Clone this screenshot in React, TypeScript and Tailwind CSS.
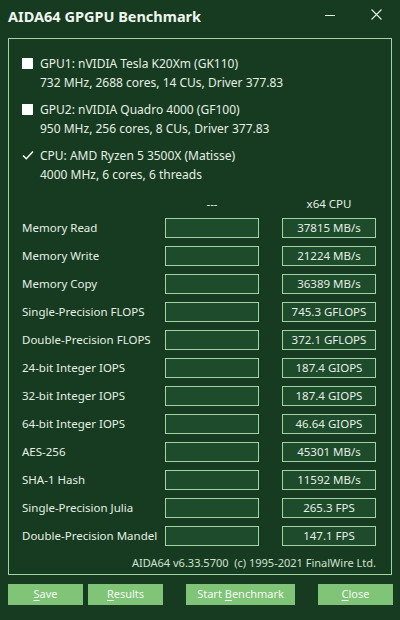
import React from "react";

const devices = [
  { name: "GPU1: nVIDIA Tesla K20Xm (GK110)", info: "732 MHz, 2688 cores, 14 CUs, Driver 377.83", checked: false },
  { name: "GPU2: nVIDIA Quadro 4000 (GF100)", info: "950 MHz, 256 cores, 8 CUs, Driver 377.83", checked: false },
  { name: "CPU: AMD Ryzen 5 3500X (Matisse)", info: "4000 MHz, 6 cores, 6 threads", checked: true },
];

const results = [
  ["Memory Read", "37815 MB/s"],
  ["Memory Write", "21224 MB/s"],
  ["Memory Copy", "36389 MB/s"],
  ["Single-Precision FLOPS", "745.3 GFLOPS"],
  ["Double-Precision FLOPS", "372.1 GFLOPS"],
  ["24-bit Integer IOPS", "187.4 GIOPS"],
  ["32-bit Integer IOPS", "187.4 GIOPS"],
  ["64-bit Integer IOPS", "46.64 GIOPS"],
  ["AES-256", "45301 MB/s"],
  ["SHA-1 Hash", "11592 MB/s"],
  ["Single-Precision Julia", "265.3 FPS"],
  ["Double-Precision Mandel", "147.1 FPS"],
];

function Check({ checked }: { checked: boolean }) {
  if (!checked) return <span className="block h-[11px] w-[11px] bg-white" />;
  return (
    <svg width="12" height="11" viewBox="0 0 12 11" className="block">
      <path d="M1 5.5 L4.3 8.8 L11 1.5" fill="none" stroke="#ffffff" strokeWidth="1.4" />
    </svg>
  );
}

function Btn({ children, w }: { children: React.ReactNode; w: string }) {
  return (
    <button className={`h-[21px] ${w} bg-[#7fc477] text-[11px] text-[#f4fbf2]`}>
      {children}
    </button>
  );
}

export default function App() {
  return (
    <div
      className="h-[620px] w-[400px] overflow-hidden bg-[#173b21] text-[#e4efe3]"
      style={{ fontFamily: '"Noto Sans", "Open Sans", sans-serif' }}
    >
      <div className="flex h-[38px] items-center pb-[9px] pl-[8px] pr-[18px]">
        <h1 className="mt-[4px] flex-1 text-[14.5px] font-bold leading-none text-[#eef5ed]">
          AIDA64 GPGPU Benchmark
        </h1>
        <svg width="10" height="10" viewBox="0 0 10 10" className="mr-[36px]">
          <path d="M0 5.5 H10" stroke="#e4efe3" strokeWidth="1" />
        </svg>
        <svg width="11" height="11" viewBox="0 0 11 11">
          <path d="M0.5 0.5 L10.5 10.5 M10.5 0.5 L0.5 10.5" stroke="#e4efe3" strokeWidth="1.1" />
        </svg>
      </div>

      <div className="ml-[8px] w-[384px] border border-[#a3d3a3] pl-[13px] pr-[14px] pt-[15px] text-[11.5px]">
        <div className="flex flex-col gap-[8px] text-[12px]">
          {devices.map((d) => (
            <div key={d.name} className="leading-[19px]">
              <div className="flex items-center">
                <span className="flex w-[18px] items-center">
                  <Check checked={d.checked} />
                </span>
                <span>{d.name}</span>
              </div>
              <div className="pl-[18px]">{d.info}</div>
            </div>
          ))}
        </div>

        <div className="mt-[10px] flex h-[20px] items-center">
          <span className="w-[143px]" />
          <span className="w-[94px] text-center">---</span>
          <span className="w-[23px]" />
          <span className="w-[94px] text-center">x64 CPU</span>
        </div>

        {results.map(([label, value]) => (
          <div key={label} className="flex h-[28px] items-center">
            <span className="w-[143px]">{label}</span>
            <span className="h-[20px] w-[94px] border border-[#a3d3a3] bg-[#1e4b2c]" />
            <span className="w-[23px]" />
            <span className="flex h-[20px] w-[94px] items-center justify-center border border-[#a3d3a3] bg-[#1e4b2c]">
              {value}
            </span>
          </div>
        ))}

        <div className="mt-[2px] flex h-[22px] items-center justify-end pr-[1px] text-[11px] text-[#cfe0ce]">
          AIDA64 v6.33.5700&nbsp; (c) 1995-2021 FinalWire Ltd.
        </div>
      </div>

      <div className="ml-[8px] mt-[9px] flex">
        <Btn w="w-[75px]">
          <span className="underline underline-offset-2">S</span>ave
        </Btn>
        <span className="w-[5px]" />
        <Btn w="w-[75px]">
          <span className="underline underline-offset-2">R</span>esults
        </Btn>
        <span className="w-[23px]" />
        <Btn w="w-[109px]">
          Start <span className="underline underline-offset-2">B</span>enchmark
        </Btn>
        <span className="w-[23px]" />
        <Btn w="w-[75px]">
          <span className="underline underline-offset-2">C</span>lose
        </Btn>
      </div>
    </div>
  );
}
